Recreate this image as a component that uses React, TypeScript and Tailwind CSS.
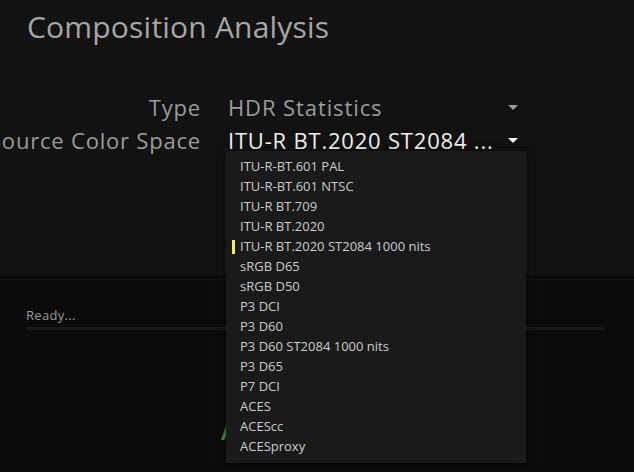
import React from 'react'

const options = [
  'ITU-R-BT.601 PAL',
  'ITU-R-BT.601 NTSC',
  'ITU-R BT.709',
  'ITU-R BT.2020',
  'ITU-R BT.2020 ST2084 1000 nits',
  'sRGB D65',
  'sRGB D50',
  'P3 DCI',
  'P3 D60',
  'P3 D60 ST2084 1000 nits',
  'P3 D65',
  'P7 DCI',
  'ACES',
  'ACEScc',
  'ACESproxy',
]

const selected = 'ITU-R BT.2020 ST2084 1000 nits'

function Caret({ light }: { light?: boolean }) {
  return (
    <svg width="10" height="6" viewBox="0 0 10 6" className="shrink-0">
      <path d="M0 0 L10 0 L5 5 Z" fill={light ? '#f2f2f2' : '#9a9a9a'} />
    </svg>
  )
}

export default function App() {
  return (
    <div
      className="relative w-[634px] h-[472px] overflow-hidden bg-[#0b0b0b]"
      style={{ fontFamily: '"Open Sans", "Noto Sans", sans-serif' }}
    >
      {/* Header panel */}
      <div className="h-[276px] bg-[#121212] flex flex-col">
        <h1 className="pl-[27px] pt-[7px] text-[30px] leading-[40px] tracking-[0.2px] font-medium text-[#a6a6a6]">
          Composition Analysis
        </h1>

        <div className="mt-[44px] flex flex-col">
          <div className="flex items-center h-[33px]">
            <div className="w-[201px] text-right text-[22px] tracking-[0.8px] font-medium text-[#9c9c9c] whitespace-nowrap">
              Type
            </div>
            <div className="ml-[27px] w-[290px] flex items-center justify-between">
              <span className="text-[22px] tracking-[0.9px] font-medium text-[#9c9c9c]">HDR Statistics</span>
              <Caret />
            </div>
          </div>
          <div className="flex items-center h-[33px]">
            {/* label is wider than its column and clipped at the window edge, as in the app */}
            <div className="w-[201px] text-right text-[22px] tracking-[0.8px] font-medium text-[#9c9c9c] whitespace-nowrap flex justify-end">
              <span className="shrink-0">Source Color Space</span>
            </div>
            <div className="ml-[27px] w-[290px] flex items-center justify-between">
              <span className="text-[22px] tracking-[0.8px] font-medium text-[#f0f0f0]">ITU-R BT.2020 ST2084 ...</span>
              <Caret light />
            </div>
          </div>
        </div>
      </div>

      {/* Divider */}
      <div className="h-[3px] bg-[#080a0a]" />
      <div className="h-[1px] bg-[#121414]" />

      {/* Status area */}
      <div className="px-[26px] pt-[27px]">
        <div className="text-[13px] leading-[16px] tracking-[0.3px] font-medium text-[#9a9a9a]">Ready...</div>
        <div className="mt-[4px] w-[579px] h-[3px] bg-[#171717]" />
      </div>

      {/* Partially hidden chart label */}
      <span className="absolute left-[221px] top-[418px] text-[20px] font-bold text-[#3f9a3f]">A</span>

      {/* Dropdown menu */}
      <div className="absolute left-[226px] top-[151px] w-[300px] h-[312px] bg-[#1a1a1a] shadow-[0_2px_8px_rgba(0,0,0,0.6)] pt-[6px]">
        {options.map((o) => (
          <div key={o} className="relative h-[20px] flex items-center pl-[14px] text-[13px] font-medium text-[#cccccc] whitespace-nowrap">
            {o === selected && (
              <span className="absolute left-[6px] top-[3px] w-[3px] h-[14px] bg-[#f2ec6a]" />
            )}
            {o}
          </div>
        ))}
      </div>
    </div>
  )
}
